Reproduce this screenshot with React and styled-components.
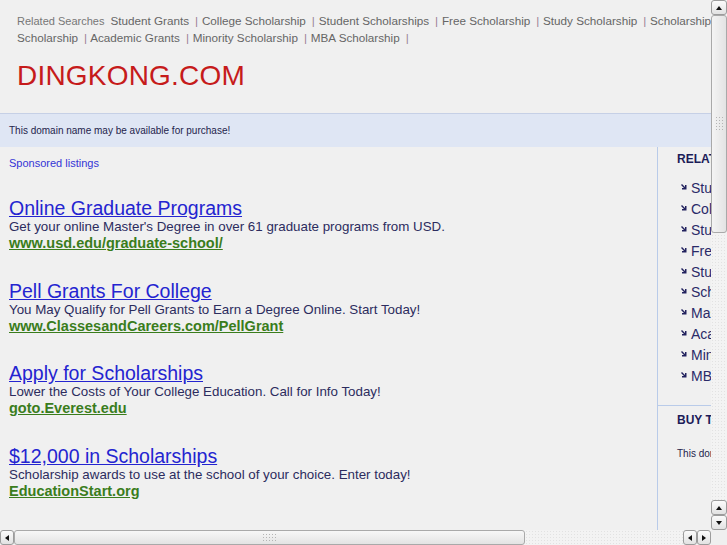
import React from 'react';
import styled, { createGlobalStyle } from 'styled-components';

const GlobalStyle = createGlobalStyle`
    html, body {
        margin: 0;
        padding: 0;
        overflow: hidden;
        background: #f0f0f0;
        font-family: "Liberation Sans", Arial, sans-serif;
    }
`;

const Page = styled.div`
    width: 864px;
`;

const Header = styled.div`
    height: 114px;
    box-sizing: border-box;
    padding: 13px 17px 0;
    border-bottom: 1px solid #c6d0e6;
`;

const Related = styled.div`
    font-size: 11.7px;
    line-height: 16.5px;
    color: #666;
`;

const RelatedLabel = styled.span`
    font-size: 11px;
    color: #777;
    margin-right: 6px;
`;

const RelatedLink = styled.a`
    color: #666;
    text-decoration: none;
`;

const Pipe = styled.span`
    color: #9a8296;
    margin: 0 0.5px 0 6px;
`;

const Brand = styled.h1`
    margin: 14px 0 0;
    font-size: 28px;
    line-height: 32px;
    font-weight: normal;
    color: #c61b1b;
    letter-spacing: 0.2px;
`;

const Banner = styled.div`
    height: 33px;
    box-sizing: border-box;
    padding: 2px 9px 1px;
    background: #dfe6f4;
    font-size: 10px;
    line-height: 30px;
    color: #24244c;
`;

const Main = styled.div`
    display: flex;
`;

const LeftCol = styled.div`
    width: 658px;
    flex-shrink: 0;
    box-sizing: border-box;
    padding: 9px 9px 40px;
    border-right: 1px solid #b9cbe9;
`;

const Sponsored = styled.div`
    font-size: 11px;
    line-height: 14px;
    color: #3434d6;
    margin-bottom: 28px;
`;

const Listing = styled.div`
    margin-bottom: 28.67px;
`;

const Title = styled.a`
    display: block;
    width: max-content;
    font-size: 19.5px;
    line-height: 20px;
    color: #2424d0;
    text-decoration: underline;
`;

const Desc = styled.div`
    font-size: 13.33px;
    line-height: 17px;
    color: #2c2c5e;
`;

const Url = styled.a`
    display: block;
    width: max-content;
    font-size: 14.5px;
    line-height: 17px;
    font-weight: bold;
    color: #3a7d1c;
    text-decoration: underline;
`;

const RightCol = styled.div`
    flex: 1;
`;

const SideBlock = styled.div`
    padding: ${(p) => p.$top}px 10px 0 19px;
    border-top: ${(p) => (p.$divider ? '1px solid #b9cbe9' : 'none')};
`;

const SideTitle = styled.div`
    font-size: 12px;
    line-height: 16px;
    font-weight: bold;
    color: #1c1c58;
    white-space: nowrap;
`;

const SideList = styled.ul`
    list-style: none;
    margin: 10.5px 0 18.5px;
    padding: 0;
`;

const SideItem = styled.li`
    display: flex;
    align-items: center;
    height: 20.9px;
    font-size: 14px;
    color: #2a2a68;
    white-space: nowrap;

    svg {
        margin: -2px 4px 0 4px;
        flex-shrink: 0;
    }
`;

const SideText = styled.div`
    margin-top: 19px;
    font-size: 10px;
    line-height: 14px;
    color: #24244c;
    white-space: nowrap;
`;

/* fake window scrollbars drawn over the page */

const VScroll = styled.div`
    position: fixed;
    top: 0;
    right: 0;
    width: 16px;
    height: 530px;
    display: flex;
    flex-direction: column;
    background-color: #f3f3f3;
    background-image: radial-gradient(#e2e2e2 0.6px, transparent 0.7px);
    background-size: 3px 3px;
`;

const HScroll = styled.div`
    position: fixed;
    left: 0;
    bottom: 0;
    width: 711px;
    height: 15px;
    display: flex;
    background-color: #f3f3f3;
    background-image: radial-gradient(#e2e2e2 0.6px, transparent 0.7px);
    background-size: 3px 3px;
`;

const Corner = styled.div`
    position: fixed;
    right: 0;
    bottom: 0;
    width: 16px;
    height: 15px;
    background: #efefef;
`;

const ScrollBtn = styled.div`
    width: ${(p) => (p.$wide ? 16 : 14)}px;
    height: 15px;
    box-sizing: border-box;
    flex-shrink: 0;
    display: flex;
    align-items: center;
    justify-content: center;
    border: 1px solid #9c9c9c;
    border-radius: 3px;
    background: linear-gradient(#fbfbfb, #e2e2e2);
`;

const Thumb = styled.div`
    flex-shrink: 0;
    box-sizing: border-box;
    width: ${(p) => p.$w};
    height: ${(p) => p.$h};
    display: flex;
    align-items: center;
    justify-content: center;
    border: 1px solid #a9a9a9;
    border-radius: 3px;
    background: ${(p) => (p.$vertical
        ? 'linear-gradient(90deg, #f4f4f4, #e3e3e3)'
        : 'linear-gradient(#f7f7f7, #e3e3e3)')};
`;

const Grip = styled.div`
    width: ${(p) => (p.$vertical ? 9 : 16)}px;
    height: ${(p) => (p.$vertical ? 16 : 9)}px;
    background-image: radial-gradient(#b4b4b4 0.8px, transparent 1px);
    background-size: 3px 3px;
`;

const Spacer = styled.div`
    flex: 1;
`;

const Arrow = ({ dir }) => {
    const pts = {
        up: '1,5 4,1 7,5',
        down: '1,1 4,5 7,1',
        left: '5,1 1,4 5,7',
        right: '1,1 5,4 1,7',
    }[dir];
    const vert = dir === 'up' || dir === 'down';
    return (
        <svg width={vert ? 8 : 6} height={vert ? 6 : 8} viewBox={vert ? '0 0 8 6' : '0 0 6 8'}>
            <polygon points={pts} fill="#111" />
        </svg>
    );
};

const ItemArrow = () => (
    <svg width="6" height="6" viewBox="0 0 6 6">
        <polygon points="0,1 1,0 4,3 4,1 5.5,1 5.5,5.5 1,5.5 1,4 3,4" fill="#22225e" />
    </svg>
);

const relatedSearches = [
    'Student Grants',
    'College Scholarship',
    'Student Scholarships',
    'Free Scholarship',
    'Study Scholarship',
    'Scholarship Search',
    'Masters Scholarship',
    'Academic Grants',
    'Minority Scholarship',
    'MBA Scholarship',
];

const listings = [
    {
        title: 'Online Graduate Programs',
        desc: "Get your online Master's Degree in over 61 graduate programs from USD.",
        url: 'www.usd.edu/graduate-school/',
    },
    {
        title: 'Pell Grants For College',
        desc: 'You May Qualify for Pell Grants to Earn a Degree Online. Start Today!',
        url: 'www.ClassesandCareers.com/PellGrant',
    },
    {
        title: 'Apply for Scholarships',
        desc: 'Lower the Costs of Your College Education. Call for Info Today!',
        url: 'goto.Everest.edu',
    },
    {
        title: '$12,000 in Scholarships',
        desc: 'Scholarship awards to use at the school of your choice. Enter today!',
        url: 'EducationStart.org',
    },
    {
        title: 'College Grants Available',
        desc: 'Find grants and scholarships for your degree program.',
        url: 'www.CollegeGrants.org',
    },
];

const App = () => {
    return (
        <>
            <GlobalStyle />
            <Page>
                <Header>
                    <Related>
                        <RelatedLabel>Related Searches</RelatedLabel>
                        {relatedSearches.map((s) => (
                            <React.Fragment key={s}>
                                <RelatedLink href="#">{s}</RelatedLink>
                                <Pipe>|</Pipe>{' '}
                            </React.Fragment>
                        ))}
                    </Related>
                    <Brand>DINGKONG.COM</Brand>
                </Header>
                <Banner>This domain name may be available for purchase!</Banner>
                <Main>
                    <LeftCol>
                        <Sponsored>Sponsored listings</Sponsored>
                        {listings.map((l) => (
                            <Listing key={l.title}>
                                <Title href="#">{l.title}</Title>
                                <Desc>{l.desc}</Desc>
                                <Url href="#">{l.url}</Url>
                            </Listing>
                        ))}
                    </LeftCol>
                    <RightCol>
                        <SideBlock $top={4}>
                            <SideTitle>RELATED SEARCHES</SideTitle>
                            <SideList>
                                {relatedSearches.map((s) => (
                                    <SideItem key={s}>
                                        <ItemArrow />
                                        {s}
                                    </SideItem>
                                ))}
                            </SideList>
                        </SideBlock>
                        <SideBlock $top={6} $divider>
                            <SideTitle>BUY THIS DOMAIN</SideTitle>
                            <SideText>This domain may be for sale.</SideText>
                        </SideBlock>
                    </RightCol>
                </Main>
            </Page>

            <VScroll>
                <ScrollBtn $wide><Arrow dir="up" /></ScrollBtn>
                <Thumb $vertical $w="16px" $h="218px"><Grip $vertical /></Thumb>
                <Spacer />
                <ScrollBtn $wide><Arrow dir="up" /></ScrollBtn>
                <ScrollBtn $wide><Arrow dir="down" /></ScrollBtn>
            </VScroll>
            <HScroll>
                <ScrollBtn><Arrow dir="left" /></ScrollBtn>
                <Thumb $w="511px" $h="15px"><Grip /></Thumb>
                <Spacer />
                <ScrollBtn><Arrow dir="left" /></ScrollBtn>
                <ScrollBtn><Arrow dir="right" /></ScrollBtn>
            </HScroll>
            <Corner />
        </>
    );
};

export default App;
